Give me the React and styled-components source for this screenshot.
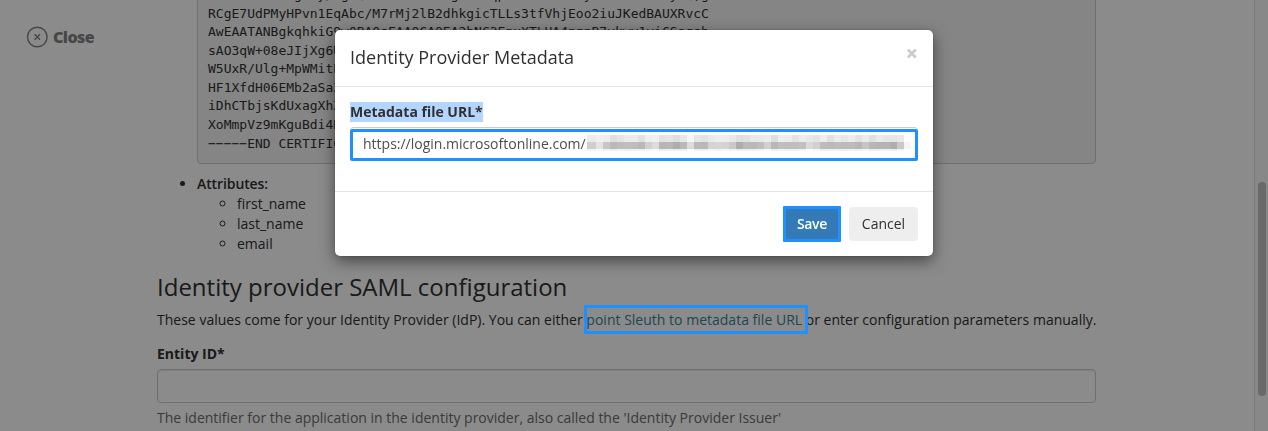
import React from "react";
import styled, { createGlobalStyle } from "styled-components";

const GlobalStyle = createGlobalStyle`
  * { box-sizing: border-box; }
  html, body { margin: 0; height: 100%; overflow: hidden; }
  body {
    background: #fff;
    color: #303030;
    font: 14px/20px "Open Sans", "Noto Sans", sans-serif;
  }
`;

const Page = styled.div`
  display: grid;
  grid-template-columns: 157px 939px 1fr 14px;
  height: 431px;
  overflow: hidden;
`;

const Sidebar = styled.aside`
  padding: 26px 0 0 26px;
`;

const CloseLink = styled.a`
  display: flex;
  align-items: center;
  gap: 5px;
  height: 22px;
  color: #838383;
  font-size: 16px;
  font-weight: 800;
  letter-spacing: -0.55px;
`;

const Content = styled.main`
  grid-column: 2;
  margin-top: -25px;
`;

const Certificate = styled.pre`
  margin: 0 0 10px;
  padding: 10px;
  border: 1px solid #ccc;
  border-radius: 4px;
  background: #f5f5f5;
  font: 13px/18.57px "DejaVu Sans Mono", monospace;
`;

const List = styled.ul`
  margin: 0;
  padding: 0 0 0 40px;
  list-style: ${(p) => p.$marker || "none"};
`;

const GroupName = styled.strong`
  display: block;
  font-weight: 600;
  letter-spacing: -0.1px;
`;

const Heading = styled.h2`
  margin: 19px 0 10px;
  font-size: 24px;
  line-height: 27px;
  font-weight: 400;
`;

const Paragraph = styled.p`
  margin: 0 0 14px;
  white-space: nowrap;
  letter-spacing: 0.01px;
`;

const MetadataLink = styled.a`
  position: relative;
  color: #388296;
`;

const LinkHighlight = styled.span`
  position: absolute;
  z-index: 2;
  inset: -5px -6px -5px -2px;
  border: 3px solid #1e90ff;
`;

const Label = styled.label`
  display: block;
  font-weight: 700;
`;

const TextInput = styled.input`
  display: block;
  width: 100%;
  height: 34px;
  margin: 5px 0;
  border: 1px solid #ccc;
  border-radius: 4px;
  background: #fff;
  box-shadow: inset 0 1px 1px rgba(0, 0, 0, 0.075);
`;

const Help = styled.span`
  color: #6c6c6c;
`;

const ScrollTrack = styled.div`
  grid-column: 4;
  padding: 182px 2px 0 3px;
  border-left: 1px solid #e3e3e3;
  background: #fafafa;
`;

const ScrollThumb = styled.div`
  width: 8px;
  height: 214px;
  border-radius: 4px;
  background: #c1c1c1;
`;

const Backdrop = styled.div`
  position: fixed;
  z-index: 1;
  inset: 0;
  background: rgba(0, 0, 0, 0.455);
`;

const ModalLayer = styled.div`
  position: fixed;
  z-index: 3;
  inset: 0;
  display: flex;
  justify-content: center;
  align-items: flex-start;
  padding-top: 30px;
`;

const Dialog = styled.section`
  width: 598px;
  height: 226px;
  border-radius: 5px;
  background: #fff;
  box-shadow: 0 0 1px rgba(0, 0, 0, 0.6), 0 5px 15px rgba(0, 0, 0, 0.5);
`;

const DialogHeader = styled.header`
  display: flex;
  justify-content: space-between;
  align-items: flex-start;
  height: 57px;
  padding: 15px 15px 0;
  border-bottom: 1px solid #e5e5e5;
`;

const DialogTitle = styled.h4`
  margin: 0;
  font-size: 18px;
  line-height: 25px;
  font-weight: 400;
`;

const DismissIcon = styled.svg`
  width: 11px;
  height: 10px;
  margin: 4px 1px 0 0;
`;

const DialogBody = styled.div`
  height: 104px;
  padding: 15px 15px 0;
`;

const SelectedText = styled.span`
  display: inline-block;
  background: #b4d5fe;
`;

const UrlField = styled.div`
  height: 34px;
  margin-top: 5px;
  padding-top: 2px;
  border-top: 1px solid #ccc;
  border-radius: 4px;
`;

const UrlFrame = styled.div`
  display: flex;
  align-items: center;
  height: 32px;
  margin-top: -1px;
  padding: 0 0 2px 10px;
  border: 3px solid #1e90ff;
  border-radius: 2px;
  color: #4d4d4d;
`;

const Mosaic = styled.div`
  display: grid;
  grid-template-rows: 7px 7px 2px;
  margin: -2px 0 0 1px;
`;

const MosaicRow = styled.div`
  display: flex;
`;

const Cell = styled.i`
  width: 7px;
  background: ${(p) => p.$tone};
  &:first-child { width: 9px; }
`;

const DialogFooter = styled.footer`
  display: flex;
  justify-content: flex-end;
  gap: 8px;
  height: 65px;
  padding: 14px 15px 0;
  border-top: 1px solid #e5e5e5;
`;

const Button = styled.button`
  width: ${(p) => (p.$primary ? "58px" : "69px")};
  height: ${(p) => (p.$primary ? "36px" : "34px")};
  margin-top: ${(p) => (p.$primary ? "0" : "1px")};
  padding: 0 0 1px;
  border: ${(p) => (p.$primary ? "3px solid #1e90ff" : "0")};
  border-radius: ${(p) => (p.$primary ? "1px" : "4px")};
  background: ${(p) => (p.$primary ? "#337ab7" : "#eee")};
  color: ${(p) => (p.$primary ? "#fff" : "#303030")};
  font: inherit;
  font-weight: ${(p) => (p.$primary ? 600 : 400)};
  letter-spacing: ${(p) => (p.$primary ? "-0.3px" : "0")};
`;

const certificate = `MIIDBTCCAe2gAwy/AgIQXzBVkTmRwaNg1BxEqpZ0vKcTfUWsyBHoLEk2XMiy9Q,g
RCgE7UdPMyHPvn1EqAbc/M7rMj2lB2dhkgicTLLs3tfVhjEoo2iuJKedBAUXRvcC
AwEAATANBgkqhkiG9w0BAQsFAAOCAQEA2bNC3EpuXTLUA4ngnB7vkwv1yiCSagsh
sAO3qW+08eJIjXg6U
W5UxR/Ulg+MpWMitE
HF1XfdH06EMb2aSaZ
iDhCTbjsKdUxagXhZ
XoMmpVz9mKguBdi4B
−−−−−END CERTIFICATE−−−−−`;

const tones = [
  "eb f0 ee df e5 ec eb e1 ee f0 e2 e5 df e8 f6 e6 e3 ea ee ed e8 df e1 e8 e9 ed df ee ed e3 ec e8 e4 ee e1 ec e6 ed e3 eb e0 ea e6 e5 e9 ff",
  "cf e3 c6 b9 bd bf bd b8 d0 dc b6 b7 ad b9 dc b9 b8 d4 d5 d4 c9 ac ba b8 be d0 b7 bf be be c0 d9 d0 bc ba bd bb bc b7 c5 b7 b4 b5 ae c9 f5",
  "f4 f8 f2 ef f2 ee f1 f0 f6 f8 ee f1 ef ef fb f0 ef f7 f2 f7 f2 ef ee f1 f2 f8 ee f3 f1 f0 f3 fb f6 ee f1 f0 ef f2 f0 f4 ed f0 f1 ee f3 ff",
].map((row) => row.split(" ").map((v) => `#${v}${v}${v}`));

export default function App() {
  return (
    <>
      <GlobalStyle />
      <Page>
        <Sidebar>
          <CloseLink>
            <svg width="22" height="22" viewBox="0 0 22 22" fill="none" stroke="currentColor">
              <circle cx="11.3" cy="11" r="9.8" strokeWidth="1.4" />
              <path d="M8.6 8.3l5.4 5.4M14 8.3l-5.4 5.4" strokeWidth="1.5" />
            </svg>
            Close
          </CloseLink>
        </Sidebar>
        <Content>
          <List>
            <li><Certificate>{certificate}</Certificate></li>
          </List>
          <List $marker="disc">
            <li>
              <GroupName>Attributes:</GroupName>
              <List $marker="circle">
                <li>first_name</li>
                <li>last_name</li>
                <li>email</li>
              </List>
            </li>
          </List>
          <Heading>Identity provider SAML configuration</Heading>
          <Paragraph>
            These values come for your Identity Provider (IdP). You can either{" "}
            <MetadataLink>point Sleuth to metadata file URL<LinkHighlight /></MetadataLink>{" "}
            or enter configuration parameters manually.
          </Paragraph>
          <Label>Entity ID*</Label>
          <TextInput />
          <Help>The identifier for the application in the identity provider, also called the 'Identity Provider Issuer'</Help>
        </Content>
        <ScrollTrack><ScrollThumb /></ScrollTrack>
      </Page>
      <Backdrop />
      <ModalLayer>
        <Dialog>
          <DialogHeader>
            <DialogTitle>Identity Provider Metadata</DialogTitle>
            <DismissIcon viewBox="0 0 11 10" stroke="#ccc" strokeWidth="2.8">
              <path d="M1.8 0.6l8 8M9.8 0.6l-8 8" />
            </DismissIcon>
          </DialogHeader>
          <DialogBody>
            <Label><SelectedText>Metadata file URL*</SelectedText></Label>
            <UrlField>
              <UrlFrame>
                https://login.microsoftonline.com/
                <Mosaic>
                  {tones.map((row, r) => (
                    <MosaicRow key={r}>
                      {row.map((tone, c) => <Cell key={c} $tone={tone} />)}
                    </MosaicRow>
                  ))}
                </Mosaic>
              </UrlFrame>
            </UrlField>
          </DialogBody>
          <DialogFooter>
            <Button $primary>Save</Button>
            <Button>Cancel</Button>
          </DialogFooter>
        </Dialog>
      </ModalLayer>
    </>
  );
}
